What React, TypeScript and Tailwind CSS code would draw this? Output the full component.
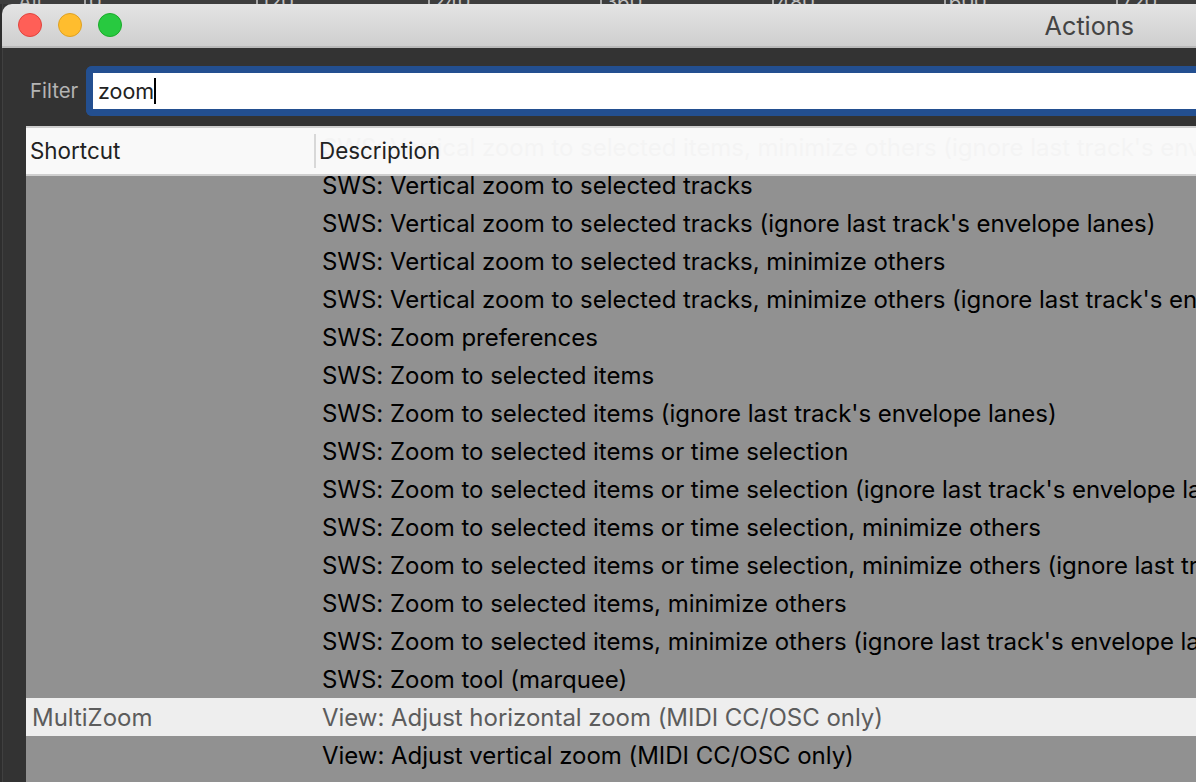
const rows: [string, string][] = [
  ["", "SWS: Vertical zoom to selected items, minimize others (ignore last track's envelope lanes)"],
  ["", "SWS: Vertical zoom to selected tracks"],
  ["", "SWS: Vertical zoom to selected tracks (ignore last track's envelope lanes)"],
  ["", "SWS: Vertical zoom to selected tracks, minimize others"],
  ["", "SWS: Vertical zoom to selected tracks, minimize others (ignore last track's envelope lanes)"],
  ["", "SWS: Zoom preferences"],
  ["", "SWS: Zoom to selected items"],
  ["", "SWS: Zoom to selected items (ignore last track's envelope lanes)"],
  ["", "SWS: Zoom to selected items or time selection"],
  ["", "SWS: Zoom to selected items or time selection (ignore last track's envelope lanes)"],
  ["", "SWS: Zoom to selected items or time selection, minimize others"],
  ["", "SWS: Zoom to selected items or time selection, minimize others (ignore last track's envelope lanes)"],
  ["", "SWS: Zoom to selected items, minimize others"],
  ["", "SWS: Zoom to selected items, minimize others (ignore last track's envelope lanes)"],
  ["", "SWS: Zoom tool (marquee)"],
  ["MultiZoom", "View: Adjust horizontal zoom (MIDI CC/OSC only)"],
  ["", "View: Adjust vertical zoom (MIDI CC/OSC only)"],
];

const ticks = ["0", "120", "240", "360", "480", "600", "720"];

export default function App() {
  return (
    <div className="h-[782px] w-[1196px] overflow-hidden bg-[#2e2e2e] font-['Inter',sans-serif]">
      <div className="flex h-[4px] overflow-hidden bg-[#3d3d3d]">
        <div className="flex h-[4px] w-[84px] shrink-0 items-end pl-[18px]">
          <span className="text-[20px] leading-[4px] text-[#b5b5b5]">All</span>
        </div>
        {ticks.map((t) => (
          <div key={t} className="flex h-[4px] w-[172px] shrink-0 items-end border-l-2 border-[#a8a8a8] pl-[3px]">
            <span className="text-[20px] leading-[4px] text-[#c0c0c0]">{t}</span>
          </div>
        ))}
      </div>
      <div className="ml-[2px] flex h-[778px] flex-col border-l border-[#404040] bg-[#333333]">
        <div className="-ml-px flex h-[44px] shrink-0 items-center gap-[16px] rounded-tl-[10px] border-b-2 border-[#b9b9b9] bg-gradient-to-b from-[#e4e4e4] to-[#cfcfcf] pl-[16px]">
          <span className="h-[24px] w-[24px] rounded-full border border-[#e0443e] bg-[#ff5f57]" />
          <span className="h-[24px] w-[24px] rounded-full border border-[#dea123] bg-[#ffbd2e]" />
          <span className="h-[24px] w-[24px] rounded-full border border-[#1aab29] bg-[#28c940]" />
          <span className="ml-auto mr-[62px] translate-y-[2px] text-[25.2px] leading-none text-[#444444]">Actions</span>
        </div>
        <div className="-ml-px flex h-[78px] shrink-0 items-center pl-[28px] pt-[8px]">
          <span className="w-[56px] pt-[1px] text-[20.4px] text-[#b4b4b4]">Filter</span>
          <div className="flex h-[50px] flex-1 items-center rounded-l-[6px] border-y-[7px] border-l-[7px] border-[#234f90] bg-white pl-[5px]">
            <span className="pt-[1px] text-[21.5px] leading-none text-[#222222]">zoom</span>
            <span className="h-[26px] w-[2px] bg-black" />
          </div>
        </div>
        <div className="relative -ml-px ml-[23px] flex-1 overflow-hidden bg-[#919191] pt-[2px]">
          <div className="absolute inset-x-0 top-0 z-10 flex h-[50px] items-center border-y-2 border-[#cfcfcf] bg-[#fcfcfc]/[.97] pb-[1px] text-[22.4px] text-[#222222]">
            <span className="w-[288px] shrink-0 pl-[4px]">Shortcut</span>
            <span className="h-[34px] w-[2px] shrink-0 bg-[#d8d8d8]" />
            <span className="pl-[3px]">Description</span>
          </div>
          {rows.map(([k, d]) => (
            <div key={d} className={k ? "flex h-[38px] items-center bg-[#eeeeee] pt-[2px] text-[#5c5c5c]" : "flex h-[38px] items-center pt-[2px] text-black"}>
              <span className="w-[296px] shrink-0 pl-[6px] text-[24px] tracking-[-0.02px]">{k}</span>
              <span className="whitespace-nowrap text-[24px] tracking-[-0.03px]">{d}</span>
            </div>
          ))}
        </div>
      </div>
    </div>
  );
}
